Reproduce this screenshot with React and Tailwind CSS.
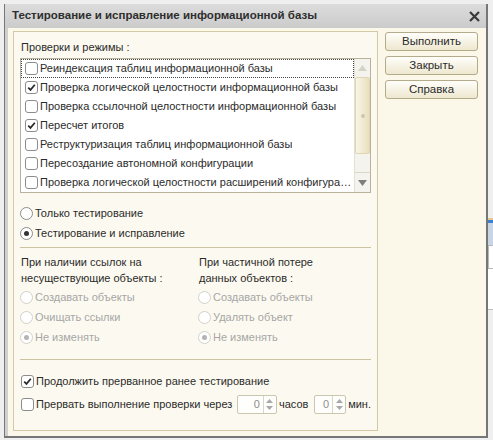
import React from "react";

const checks = [
  { label: "Реиндексация таблиц информационной базы", checked: false, focus: true },
  { label: "Проверка логической целостности информационной базы", checked: true },
  { label: "Проверка ссылочной целостности информационной базы", checked: false },
  { label: "Пересчет итогов", checked: true },
  { label: "Реструктуризация таблиц информационной базы", checked: false },
  { label: "Пересоздание автономной конфигурации", checked: false },
  { label: "Проверка логической целостности расширений конфигурации", checked: false },
];

function CheckBox({ checked }) {
  return (
    <span className="flex h-[13px] w-[13px] shrink-0 items-center justify-center rounded-[3px] border border-[#8c8c8c] bg-white">
      {checked && (
        <svg width="9" height="9" viewBox="0 0 9 9">
          <path d="M1.2 4.6 L3.5 6.9 L7.8 1.8" fill="none" stroke="#2a2a2a" strokeWidth="1.7" />
        </svg>
      )}
    </span>
  );
}

function Radio({ checked, disabled }) {
  return (
    <span
      className={
        "flex h-[13px] w-[13px] shrink-0 items-center justify-center rounded-full border bg-white " +
        (disabled ? "border-[#d2d0c8]" : "border-[#8c8c8c]")
      }
    >
      {checked && (
        <span className={"h-[5px] w-[5px] rounded-full " + (disabled ? "bg-[#b4b4b4]" : "bg-[#333333]")} />
      )}
    </span>
  );
}

function RadioRow({ label, checked, disabled }) {
  return (
    <div className="flex h-[20px] items-center gap-[2px]">
      <Radio checked={checked} disabled={disabled} />
      <span className={disabled ? "text-[#a6a6a6]" : ""}>{label}</span>
    </div>
  );
}

function Btn({ children }) {
  return (
    <button className="h-[19px] w-full rounded-[3px] border border-[#b4ab8b] bg-linear-to-b from-[#fffefa] to-[#eee8d0] text-[11.5px] leading-none text-[#2b2b2b]">
      {children}
    </button>
  );
}

function Spinner({ width }) {
  return (
    <div className={"flex h-[19px] rounded-[2px] border border-[#cdc7b0] bg-[#fefefc] " + width}>
      <span className="flex-1 pr-[3px] text-right leading-[17px] text-[#8e8e8e]">0</span>
      <span className="flex w-[13px] flex-col items-center justify-center gap-[3px] border-l border-[#dcd7c4]">
        <svg width="7" height="4" viewBox="0 0 7 4">
          <path d="M0 4 L3.5 0 L7 4 Z" fill="#a9a9a9" />
        </svg>
        <svg width="7" height="4" viewBox="0 0 7 4">
          <path d="M0 0 L3.5 4 L7 0 Z" fill="#a9a9a9" />
        </svg>
      </span>
    </div>
  );
}

function ListBox() {
  return (
    <div className="mt-[3px] flex h-[135px] border border-[#b9b39c] bg-white">
      <div className="flex min-w-0 flex-1 flex-col">
        {checks.map((c) => (
          <div
            key={c.label}
            className={
              "flex h-[19px] items-center gap-[2px] pl-[3px] " +
              (c.focus ? "border border-dotted border-[#444444]" : "border border-transparent")
            }
          >
            <CheckBox checked={c.checked} />
            <span className="truncate">{c.label}</span>
          </div>
        ))}
      </div>
      <div className="flex w-[16px] flex-col border-l border-[#e4e0d0] bg-[#f4f3ee]">
        <div className="flex h-[18px] items-center justify-center">
          <svg width="9" height="6" viewBox="0 0 9 6">
            <path d="M0 6 L4.5 0 L9 6 Z" fill="#d6d3c6" />
          </svg>
        </div>
        <div className="flex h-[77px] items-center justify-center rounded-[2px] border border-[#ddd5b4] bg-linear-to-r from-[#f9f6e8] to-[#e8dfbd]">
          <span className="h-[4px] w-[4px] rounded-full bg-[#cfc7a8]" />
        </div>
        <div className="h-[18px]" />
        <div className="flex h-[20px] items-center justify-center border-t border-[#ddd8c6]">
          <svg width="9" height="6" viewBox="0 0 9 6">
            <path d="M0 0 L4.5 6 L9 0 Z" fill="#7e7e7e" />
          </svg>
        </div>
      </div>
    </div>
  );
}

export default function App() {
  return (
    <div className="flex h-[440px] w-[493px] flex-col overflow-hidden bg-[#efefef] font-['Liberation_Sans',Arial,sans-serif] text-[11px] text-[#2b2b2b]">
      <div className="h-[4px] shrink-0" />
      <div className="flex">
        <div className="w-[4px] shrink-0" />
        <div className="flex h-[434px] w-[484px] shrink-0 flex-col border-b-2 border-l border-r-2 border-[#767676] bg-[#d0d0d0]">
          <div className="flex h-[24px] shrink-0 items-center justify-between bg-linear-to-b from-[#dcdcdc] to-[#cbcbcb] pl-[7px] pr-[6px]">
            <span className="text-[11.5px] font-bold text-[#2e2e2e]">Тестирование и исправление информационной базы</span>
            <svg width="11" height="11" viewBox="0 0 11 11">
              <path d="M1 1 L10 10 M10 1 L1 10" stroke="#3a3a3a" strokeWidth="2.2" />
            </svg>
          </div>
          <div className="ml-[3px] flex flex-1 gap-[7px] bg-[#fbf8ea] pb-[5px] pl-[5px] pr-[7px] pt-[3px]">
            <div className="flex w-[365px] flex-col border border-[#d3c9a6] bg-[#fcfaf0] px-[6px] pt-[7px]">
              <div className="h-[16px] pl-[1px] leading-[16px]">Проверки и режимы :</div>
              <ListBox />
              <div className="mt-[10px]">
                <RadioRow label="Только тестирование" />
                <RadioRow label="Тестирование и исправление" checked />
              </div>
              <div className="mt-[4px] h-px bg-[#cdc3a0]" />
              <div className="mt-[6px] flex">
                <div className="w-[178px]">
                  <div className="pl-[1px] leading-[16px]">
                    При наличии ссылок на
                    <br />
                    несуществующие объекты :
                  </div>
                  <div className="mt-[1px]">
                    <RadioRow label="Создавать объекты" disabled />
                    <RadioRow label="Очищать ссылки" disabled />
                    <RadioRow label="Не изменять" disabled checked />
                  </div>
                </div>
                <div>
                  <div className="pl-[1px] leading-[16px]">
                    При частичной потере
                    <br />
                    данных объектов :
                  </div>
                  <div className="mt-[1px]">
                    <RadioRow label="Создавать объекты" disabled />
                    <RadioRow label="Удалять объект" disabled />
                    <RadioRow label="Не изменять" disabled checked />
                  </div>
                </div>
              </div>
              <div className="mt-[12px] h-px bg-[#cdc3a0]" />
              <div className="mt-[11px] flex h-[20px] items-center gap-[2px] pl-[1px]">
                <CheckBox checked />
                <span>Продолжить прерванное ранее тестирование</span>
              </div>
              <div className="mt-[3px] flex h-[20px] items-center pl-[1px]">
                <CheckBox />
                <span className="ml-[2px] mr-[5px] whitespace-nowrap">Прервать выполнение проверки через</span>
                <Spinner width="w-[40px]" />
                <span className="ml-[2px] mr-[6px]">часов</span>
                <Spinner width="w-[32px]" />
                <span className="ml-[2px]">мин.</span>
              </div>
            </div>
            <div className="flex w-[93px] flex-col gap-[5px] pt-[1px]">
              <Btn>Выполнить</Btn>
              <Btn>Закрыть</Btn>
              <Btn>Справка</Btn>
            </div>
          </div>
        </div>
        <div className="flex w-[5px] shrink-0 flex-col pt-[214px]">
          <div className="h-[2px] bg-[#e6c98f]" />
          <div className="h-[3px] bg-[#3d7fd2]" />
          <div className="h-[22px] bg-[#c9d5e5]" />
          <div className="h-[24px] border-y border-l border-[#b8b8b8] bg-white" />
          <div className="h-[40px] bg-white" />
          <div className="h-px bg-[#bdbdbd]" />
        </div>
      </div>
    </div>
  );
}
